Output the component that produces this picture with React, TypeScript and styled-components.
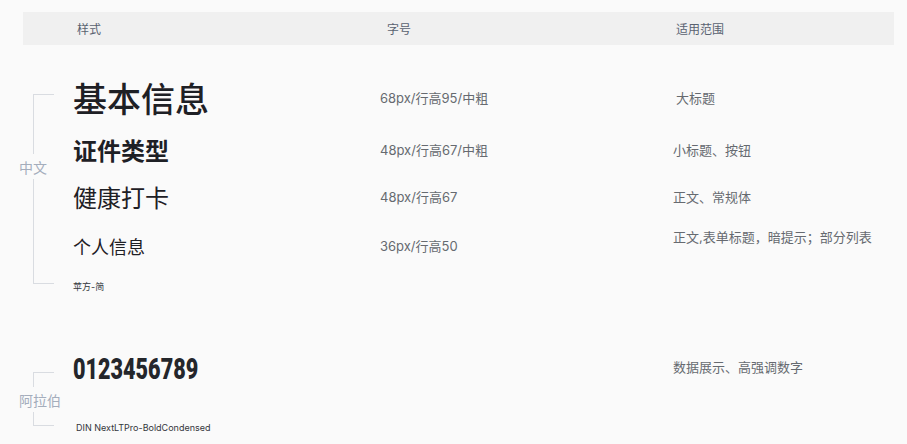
import styled, { createGlobalStyle } from "styled-components";

const GlobalStyle = createGlobalStyle`
  html, body {
    margin: 0;
    background: #fafafa;
  }
  body {
    font-family: Inter, "Noto Sans CJK SC", sans-serif;
  }
`;

const Page = styled.div`
  box-sizing: border-box;
  min-height: 444px;
  padding: 12px 13px 0 19px;
`;

const HeaderBar = styled.div`
  display: grid;
  grid-template-columns: 310px 289px 1fr;
  align-items: center;
  height: 33px;
  margin-left: 4px;
  padding-left: 54px;
  background: #f0f0f0;
  font-size: 12px;
  color: #596270;
`;

const Section = styled.section<{ $top: number }>`
  display: flex;
  margin-top: ${(p) => p.$top}px;
`;

const Bracket = styled.div<{ $padTop: number; $padBottom: number }>`
  display: flex;
  flex-direction: column;
  width: 54px;
  flex-shrink: 0;
  padding: ${(p) => p.$padTop}px 0 ${(p) => p.$padBottom}px;
`;

const Arm = styled.div<{ $height?: number; $bottom?: boolean }>`
  width: 20px;
  margin-left: 14px;
  border-left: 1px solid #d9dce1;
  ${(p) => (p.$bottom ? "border-bottom" : "border-top")}: 1px solid #d9dce1;
  ${(p) => (p.$height ? `height: ${p.$height}px;` : "flex: 1;")}
`;

const BracketLabel = styled.div`
  margin: 6px 0 5px;
  font-family: "Noto Sans CJK SC", sans-serif;
  font-size: 14px;
  line-height: 14px;
  color: #a4adbc;
  white-space: nowrap;
`;

const Rows = styled.div`
  flex: 1;
  display: flex;
  flex-direction: column;
`;

const Row = styled.div<{ $height: number }>`
  display: grid;
  grid-template-columns: 307px 293px 1fr;
  align-items: center;
  height: ${(p) => p.$height}px;
`;

const Title = styled.div<{ $size: number; $weight: number }>`
  font-family: "Noto Sans CJK SC", sans-serif;
  font-size: ${(p) => p.$size}px;
  font-weight: ${(p) => p.$weight};
  line-height: 1;
  color: #1e2025;
  white-space: nowrap;
`;

const Digits = styled.div`
  display: inline-block;
  font-family: Roboto, "Liberation Sans", sans-serif;
  font-size: 30px;
  font-weight: 900;
  line-height: 1;
  color: #24262b;
  transform: scaleX(0.72);
  transform-origin: left center;
  white-space: nowrap;
`;

const Spec = styled.div`
  font-size: 13px;
  line-height: 18px;
  color: #666a70;
  white-space: nowrap;
`;

const Scope = styled.div<{ $indent?: number; $offsetTop?: number }>`
  padding-left: ${(p) => p.$indent ?? 0}px;
  font-size: 13px;
  line-height: 18px;
  color: #666a70;
  white-space: nowrap;
  ${(p) =>
    p.$offsetTop !== undefined
      ? `align-self: start; margin-top: ${p.$offsetTop}px;`
      : ""}
`;

const Footnote = styled.div<{ $height: number; $indent?: number }>`
  display: flex;
  align-items: center;
  height: ${(p) => p.$height}px;
  padding-left: ${(p) => p.$indent ?? 0}px;
  font-size: 9px;
  color: #33363b;
  white-space: nowrap;
`;

const chineseRows = [
  { text: "基本信息", size: 34, weight: 500, spec: "68px/行高95/中粗", scope: "大标题", height: 48, indent: 3 },
  { text: "证件类型", size: 24, weight: 600, spec: "48px/行高67/中粗", scope: "小标题、按钮", height: 56 },
  { text: "健康打卡", size: 24, weight: 400, spec: "48px/行高67", scope: "正文、常规体", height: 38 },
  { text: "个人信息", size: 18, weight: 400, spec: "36px/行高50", scope: "正文,表单标题，暗提示；部分列表", height: 60, offsetTop: 12 },
];

export default function App() {
  return (
    <Page>
      <GlobalStyle />
      <HeaderBar>
        <span>样式</span>
        <span>字号</span>
        <span>适用范围</span>
      </HeaderBar>

      <Section $top={29}>
        <Bracket $padTop={20} $padBottom={12}>
          <Arm $height={59} />
          <BracketLabel>中文</BracketLabel>
          <Arm $bottom />
        </Bracket>
        <Rows>
          {chineseRows.map((r) => (
            <Row key={r.text} $height={r.height}>
              <Title $size={r.size} $weight={r.weight}>
                {r.text}
              </Title>
              <Spec>{r.spec}</Spec>
              <Scope $indent={r.indent} $offsetTop={r.offsetTop}>
                {r.scope}
              </Scope>
            </Row>
          ))}
          <Footnote $height={20}>苹方-简</Footnote>
        </Rows>
      </Section>

      <Section $top={54}>
        <Bracket $padTop={22} $padBottom={10}>
          <Arm $height={14} />
          <BracketLabel>阿拉伯</BracketLabel>
          <Arm $bottom />
        </Bracket>
        <Rows>
          <Row $height={38}>
            <div>
              <Digits>0123456789</Digits>
            </div>
            <span />
            <Scope $indent={-2} $offsetTop={8}>
              数据展示、高强调数字
            </Scope>
          </Row>
          <Row $height={30} />
          <Footnote $height={18} $indent={3}>
            DIN NextLTPro-BoldCondensed
          </Footnote>
        </Rows>
      </Section>
    </Page>
  );
}
